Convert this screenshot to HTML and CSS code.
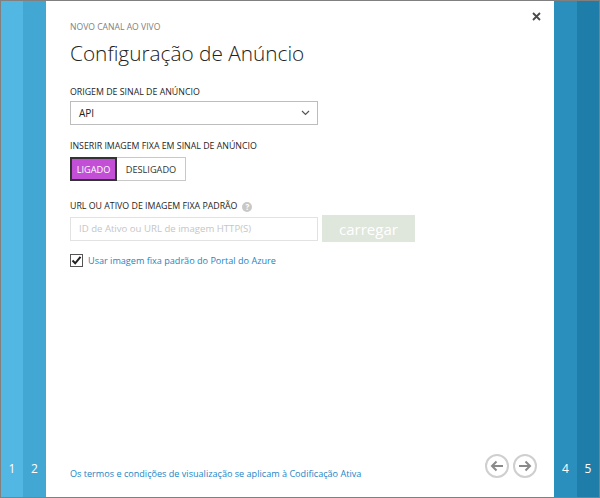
FILE: index.html
```html
<!DOCTYPE html>
<html lang="pt">
<head>
<meta charset="utf-8">
<link rel="stylesheet" href="styles.css">
</head>
<body>
<div class="frame">
  <div class="strip s1"><span>1</span></div>
  <div class="strip s2"><span>2</span></div>
  <div class="panel">
    <button class="close" aria-label="Fechar">
      <svg width="9" height="9" viewBox="0 0 9 9"><path d="M1 1L8 8M8 1L1 8" stroke="#4a4a4a" stroke-width="1.8"/></svg>
    </button>
    <div class="eyebrow">NOVO CANAL AO VIVO</div>
    <h1 class="title">Configuração de Anúncio</h1>

    <div class="label">ORIGEM DE SINAL DE ANÚNCIO</div>
    <div class="select">
      <span>API</span>
      <svg width="9" height="6" viewBox="0 0 9 6"><path d="M1 1L4.5 4.5L8 1" fill="none" stroke="#555" stroke-width="1.2"/></svg>
    </div>

    <div class="label label-2">INSERIR IMAGEM FIXA EM SINAL DE ANÚNCIO</div>
    <div class="toggle">
      <span class="opt on">LIGADO</span>
      <span class="opt off">DESLIGADO</span>
    </div>

    <div class="label label-3">URL OU ATIVO DE IMAGEM FIXA PADRÃO <span class="help">?</span></div>
    <div class="url-row">
      <div class="input">ID de Ativo ou URL de imagem HTTP(S)</div>
      <div class="btn">carregar</div>
    </div>

    <div class="check-row">
      <span class="check">
        <svg width="13" height="13" viewBox="0 0 13 13"><rect x="0.5" y="0.5" width="12" height="12" fill="#fff" stroke="#555"/><path d="M2.5 6.5L5.2 9.3L10.5 2.8" fill="none" stroke="#222" stroke-width="2"/></svg>
      </span>
      <a class="link">Usar imagem fixa padrão do Portal do Azure</a>
    </div>

    <div class="footer">
      <a class="link">Os termos e condições de visualização se aplicam à Codificação Ativa</a>
      <div class="nav">
        <span class="circle"><svg width="14" height="12" viewBox="0 0 14 12"><path d="M13 6H2M6.5 1.5L2 6L6.5 10.5" fill="none" stroke="#8a8a8a" stroke-width="2"/></svg></span>
        <span class="circle"><svg width="14" height="12" viewBox="0 0 14 12"><path d="M1 6H12M7.5 1.5L12 6L7.5 10.5" fill="none" stroke="#8a8a8a" stroke-width="2"/></svg></span>
      </div>
    </div>
  </div>
  <div class="strip s4"><span>4</span></div>
  <div class="strip s5"><span>5</span></div>
</div>
</body>
</html>
```

FILE: styles.css
```css
* { box-sizing: border-box; }
html, body { margin: 0; padding: 0; }
body {
  font-family: "Open Sans", "DejaVu Sans", sans-serif;
  background: #fff;
}
.frame {
  width: 600px;
  height: 498px;
  border: 1px solid #808080;
  display: flex;
}
.strip {
  width: 23px;
  display: flex;
  flex-direction: column;
  justify-content: flex-end;
  align-items: center;
  color: #fff;
  font-size: 12px;
  padding-bottom: 20px;
}
.s1 { width: 22px; background: #52b8e3; }
.s2 { background: #42a7d2; }
.s4 { background: #2a8fbc; }
.s5 { width: 22px; background: #1e7ea9; }
.panel {
  position: relative;
  flex: 1;
  background: #fff;
  padding: 19px 17px 16px 24px;
  display: flex;
  flex-direction: column;
  align-items: flex-start;
}
.close {
  position: absolute;
  top: 11px;
  right: 13px;
  border: 0;
  background: none;
  padding: 0;
  width: 9px;
  height: 9px;
  display: flex;
}
.eyebrow {
  font-size: 8.6px;
  color: #808080;
  line-height: 14px;
}
.title {
  margin: 5px 0 0;
  font-weight: 300;
  font-size: 20.8px;
  line-height: 28px;
  color: #222;
}
.label {
  font-size: 8.8px;
  color: #1e1e1e;
  line-height: 13px;
  margin-top: 19px;
  display: flex;
  align-items: center;
}
.label-2 { margin-top: 15px; }
.label-3 { margin-top: 19px; }
.select {
  margin-top: 2px;
  width: 248px;
  height: 24px;
  border: 1px solid #bdbdbd;
  display: flex;
  align-items: center;
  justify-content: space-between;
  padding: 0 7px 0 8px;
  font-size: 10px;
  color: #222;
}
.toggle {
  margin-top: 4px;
  display: flex;
  height: 24px;
}
.opt {
  display: flex;
  align-items: center;
  font-size: 9.2px;
}
.on {
  background: #c24fd6;
  color: #fff;
  border: 2px solid #333;
  padding: 0 6px;
  width: 47px;
  justify-content: center;
}
.off {
  border: 1px solid #c8c8c8;
  border-left: 0;
  color: #333;
  width: 69px;
  justify-content: center;
}
.help {
  display: inline-flex;
  width: 10px;
  height: 10px;
  border-radius: 50%;
  background: #c8c8c8;
  color: #fff;
  font-size: 8px;
  font-weight: 700;
  align-items: center;
  justify-content: center;
  margin-left: 5px;
}
.url-row {
  margin-top: 2px;
  display: flex;
  align-items: center;
  gap: 4px;
}
.input {
  width: 248px;
  height: 24px;
  border: 1px solid #e2e2e2;
  display: flex;
  align-items: center;
  padding-left: 8px;
  font-size: 9.6px;
  color: #c6c6c6;
}
.btn {
  width: 93px;
  height: 27px;
  background: #dfe6dc;
  color: #fff;
  font-size: 15px;
  display: flex;
  align-items: center;
  justify-content: center;
}
.check-row {
  margin-top: 12px;
  display: flex;
  align-items: center;
  gap: 5px;
}
.check { display: flex; }
.link {
  color: #1a85c6;
  font-size: 9.1px;
  text-decoration: none;
}
.footer {
  margin-top: auto;
  width: 100%;
  display: flex;
  align-items: flex-end;
  justify-content: space-between;
}
.footer .link { margin-bottom: 1px; }
.nav {
  display: flex;
  gap: 4px;
  margin-bottom: 3px;
}
.circle {
  width: 24px;
  height: 24px;
  border: 2px solid #cfcfcf;
  border-radius: 50%;
  display: flex;
  align-items: center;
  justify-content: center;
}
```
